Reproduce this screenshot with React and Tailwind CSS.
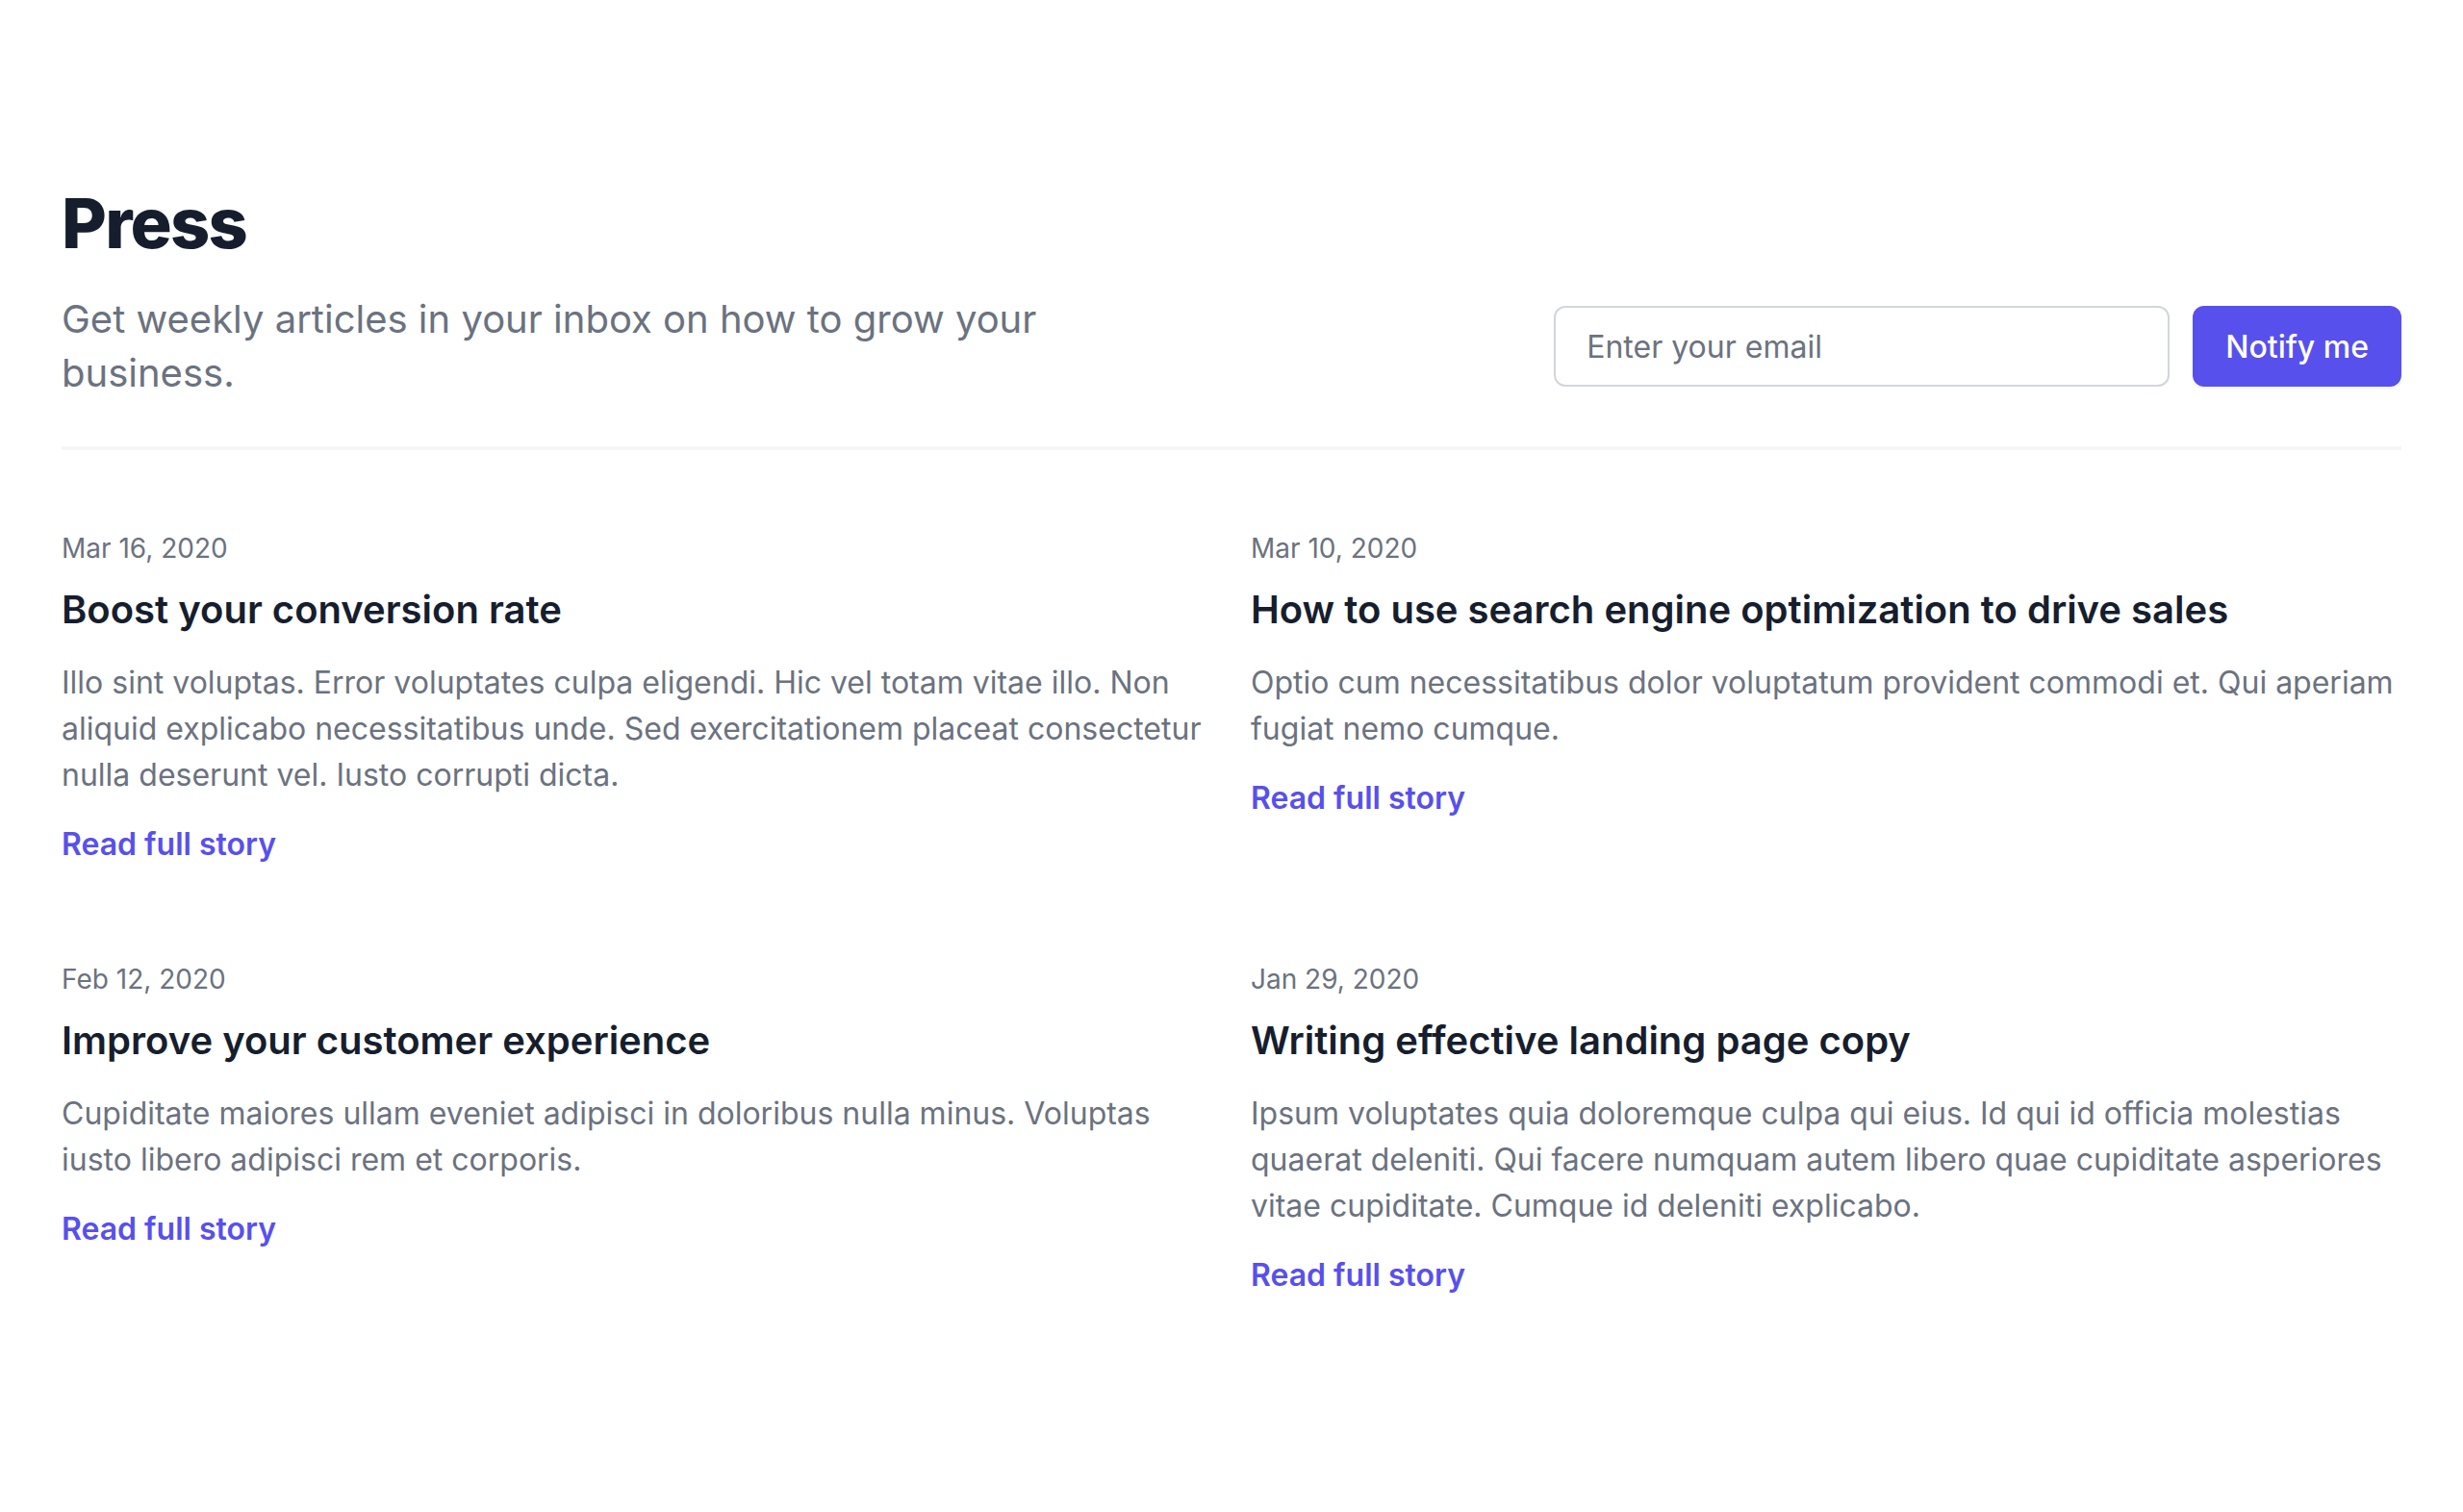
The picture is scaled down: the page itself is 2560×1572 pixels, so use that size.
export default function App() {
  const posts = [
    {
      date: "Mar 16, 2020",
      title: "Boost your conversion rate",
      body: "Illo sint voluptas. Error voluptates culpa eligendi. Hic vel totam vitae illo. Non aliquid explicabo necessitatibus unde. Sed exercitationem placeat consectetur nulla deserunt vel. Iusto corrupti dicta.",
    },
    {
      date: "Mar 10, 2020",
      title: "How to use search engine optimization to drive sales",
      body: "Optio cum necessitatibus dolor voluptatum provident commodi et. Qui aperiam fugiat nemo cumque.",
    },
    {
      date: "Feb 12, 2020",
      title: "Improve your customer experience",
      body: "Cupiditate maiores ullam eveniet adipisci in doloribus nulla minus. Voluptas iusto libero adipisci rem et corporis.",
    },
    {
      date: "Jan 29, 2020",
      title: "Writing effective landing page copy",
      body: "Ipsum voluptates quia doloremque culpa qui eius. Id qui id officia molestias quaerat deleniti. Qui facere numquam autem libero quae cupiditate asperiores vitae cupiditate. Cumque id deleniti explicabo.",
    },
  ];

  return (
    <div className="bg-white px-[64px] pt-[192px] pb-[222px] font-['Inter',sans-serif] antialiased">
      <div className="w-full">
        <div>
          <h2 className="text-[72px] leading-[80px] font-extrabold tracking-[-0.025em] text-[#161E2E]">
            Press
          </h2>
          <div className="mt-[32px] grid grid-cols-2 gap-[40px] items-center">
            <p className="text-[40px] leading-[56px] text-[#6B7280]">
              Get weekly articles in your inbox on how to grow your business.
            </p>
            <form className="flex flex-row justify-end">
              <div>
                <input
                  type="email"
                  placeholder="Enter your email"
                  className="appearance-none w-[640px] px-[32px] pt-[17px] pb-[15px] border-2 border-[#D2D6DC] text-[32px] leading-[48px] rounded-[12px] text-[#161E2E] bg-white placeholder:text-[#6B7280] outline-none"
                />
              </div>
              <div className="ml-[24px] shrink-0 inline-flex rounded-[12px] shadow-[0_2px_4px_0_rgba(0,0,0,0.05)]">
                <button
                  type="button"
                  className="bg-[#5850EC] px-[32px] pt-[17px] pb-[15px] border-2 border-transparent rounded-[12px] inline-flex items-center justify-center text-[32px] leading-[48px] font-medium text-white"
                >
                  Notify me
                </button>
              </div>
            </form>
          </div>
        </div>
        <div className="mt-[48px] border-t-[4px] border-[#F4F5F7] pt-[82px] grid grid-cols-2 gap-x-[40px] gap-y-[96px]">
          {posts.map((p) => (
            <div key={p.title}>
              <p className="text-[28px] leading-[40px] text-[#6B7280]">{p.date}</p>
              <a href="#" className="mt-[16px] block">
                <p className="text-[40px] leading-[56px] font-semibold text-[#161E2E]">{p.title}</p>
                <p className="mt-[24px] text-[32px] leading-[48px] text-[#6B7280]">{p.body}</p>
              </a>
              <div className="mt-[24px]">
                <a href="#" className="text-[32px] leading-[48px] font-semibold text-[#5850EC]">
                  Read full story
                </a>
              </div>
            </div>
          ))}
        </div>
      </div>
    </div>
  );
}
